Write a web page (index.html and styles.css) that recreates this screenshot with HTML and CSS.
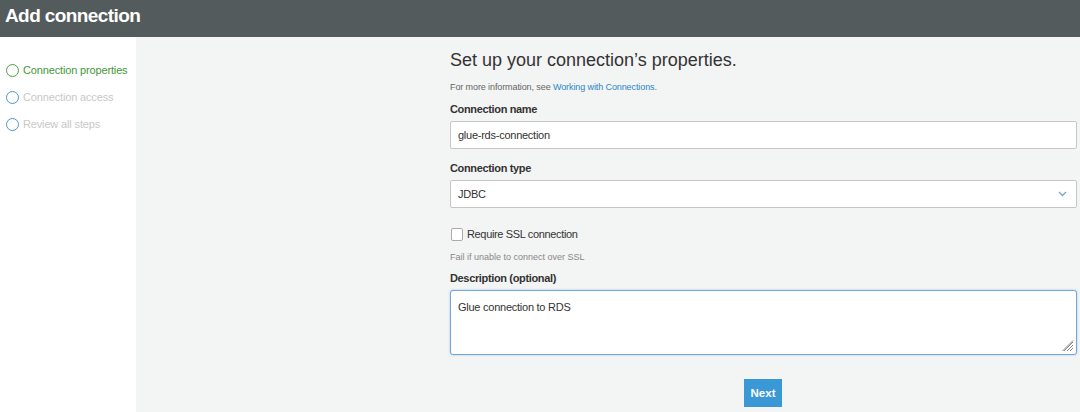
FILE: index.html
```html
<!DOCTYPE html>
<html>
<head>
<meta charset="utf-8">
<link rel="stylesheet" href="styles.css">
</head>
<body>
<header class="topbar"><h1 class="title">Add connection</h1></header>
<div class="page">
  <nav class="steps">
    <div class="step step-active"><span class="dot"></span><span>Connection properties</span></div>
    <div class="step"><span class="dot"></span><span>Connection access</span></div>
    <div class="step"><span class="dot"></span><span>Review all steps</span></div>
  </nav>
  <main class="main">
    <div class="form">
      <h2 class="heading">Set up your connection’s properties.</h2>
      <p class="info">For more information, see <a class="link">Working with Connections.</a></p>
      <label class="label label-first">Connection name</label>
      <div class="input">glue-rds-connection</div>
      <label class="label label-gap">Connection type</label>
      <div class="input select"><span>JDBC</span>
        <svg class="chev" width="9" height="6" viewBox="0 0 9 6"><path d="M1 1l3.5 3.5L8 1" fill="none" stroke="#7aa7c7" stroke-width="1.3"/></svg>
      </div>
      <div class="check-row"><span class="checkbox"></span><span>Require SSL connection</span></div>
      <p class="hint">Fail if unable to connect over SSL</p>
      <label class="label">Description (optional)</label>
      <div class="textarea">Glue connection to RDS
        <svg class="grip" width="12" height="12" viewBox="0 0 12 12"><path d="M11 2L2 11M11 5L5 11M11 8L8 11M11 0.5L0.5 11" stroke="#777" stroke-width="0.9"/></svg>
      </div>
      <div class="actions"><button class="btn">Next</button></div>
    </div>
  </main>
</div>
</body>
</html>
```
FILE: styles.css
```css
* { box-sizing: border-box; }
html, body { margin: 0; padding: 0; }
body {
  width: 1080px;
  height: 412px;
  overflow: hidden;
  font-family: "Liberation Sans", Arial, Helvetica, sans-serif;
  color: #333;
  background: #f3f4f4;
}
.topbar {
  height: 37px;
  background: #545b5d;
  display: flex;
  align-items: center;
  padding-left: 5px;
}
.title {
  margin: 0;
  margin-top: -5px;
  font-size: 19px;
  font-weight: bold;
  color: #fff;
  letter-spacing: -0.6px;
}
.page {
  display: flex;
  height: 375px;
}
.steps {
  width: 136px;
  background: #fff;
  padding-top: 25px;
  display: flex;
  flex-direction: column;
  gap: 11px;
}
.step {
  display: flex;
  align-items: center;
  gap: 4px;
  padding-left: 6px;
  font-size: 11px;
  letter-spacing: -0.15px;
  white-space: nowrap;
  height: 16px;
  color: #c8c8c8;
}
.step .dot {
  width: 13px;
  height: 13px;
  border: 1.5px solid #4b97cf;
  border-radius: 50%;
  flex: none;
}
.step-active { color: #3f9a3a; }
.step-active .dot { border-color: #4aa043; }
.main {
  flex: 1;
  padding-left: 314px;
  padding-right: 3px;
}
.form { display: flex; flex-direction: column; }
.heading {
  margin: 11px 0 0 0;
  font-size: 18px;
  font-weight: normal;
  color: #333;
  line-height: 24px;
}
.info {
  margin: 9px 0 0 0;
  font-size: 9px;
  letter-spacing: -0.1px;
  color: #666;
  line-height: 12px;
}
.link { color: #2a86c8; }
.label {
  display: block;
  font-size: 11px;
  letter-spacing: -0.35px;
  font-weight: bold;
  color: #333;
  line-height: 14px;
  margin-top: 8px;
}
.label-first { margin-top: 9px; }
.label-gap { margin-top: 12px; }
.input {
  margin-top: 5px;
  height: 28px;
  background: #fff;
  border: 1px solid #c6c6c6;
  border-radius: 2px;
  font-size: 11px;
  letter-spacing: -0.25px;
  display: flex;
  align-items: center;
  padding-left: 7px;
  color: #333;
}
.select { justify-content: space-between; padding-right: 9px; }
.chev { display: block; }
.check-row {
  margin-top: 19px;
  display: flex;
  align-items: center;
  gap: 4px;
  font-size: 11px;
  letter-spacing: -0.35px;
  color: #333;
  height: 14px;
}
.checkbox {
  width: 12px;
  height: 13px;
  border: 1px solid #aaa;
  border-radius: 2px;
  background: #fff;
  margin-left: 1px;
}
.hint {
  margin: 10px 0 0 0;
  font-size: 9px;
  letter-spacing: 0;
  color: #888;
  line-height: 12px;
}
.textarea {
  position: relative;
  margin-top: 5px;
  height: 65px;
  background: #fff;
  border: 1px solid #6fa8dc;
  border-radius: 3px;
  box-shadow: 0 0 2px rgba(80,150,220,0.5);
  font-size: 11px;
  letter-spacing: -0.25px;
  padding: 10px 7px;
  color: #333;
}
.grip { position: absolute; right: 2px; bottom: 2px; }
.actions {
  display: flex;
  justify-content: center;
  margin-top: 24px;
}
.btn {
  width: 38px;
  height: 28px;
  border: none;
  background: #3b98d6;
  color: #fff;
  font-family: "Liberation Sans", Arial, sans-serif;
  font-weight: bold;
  font-size: 11.5px;
  padding: 0;
  margin-left: -1px;
}
```
